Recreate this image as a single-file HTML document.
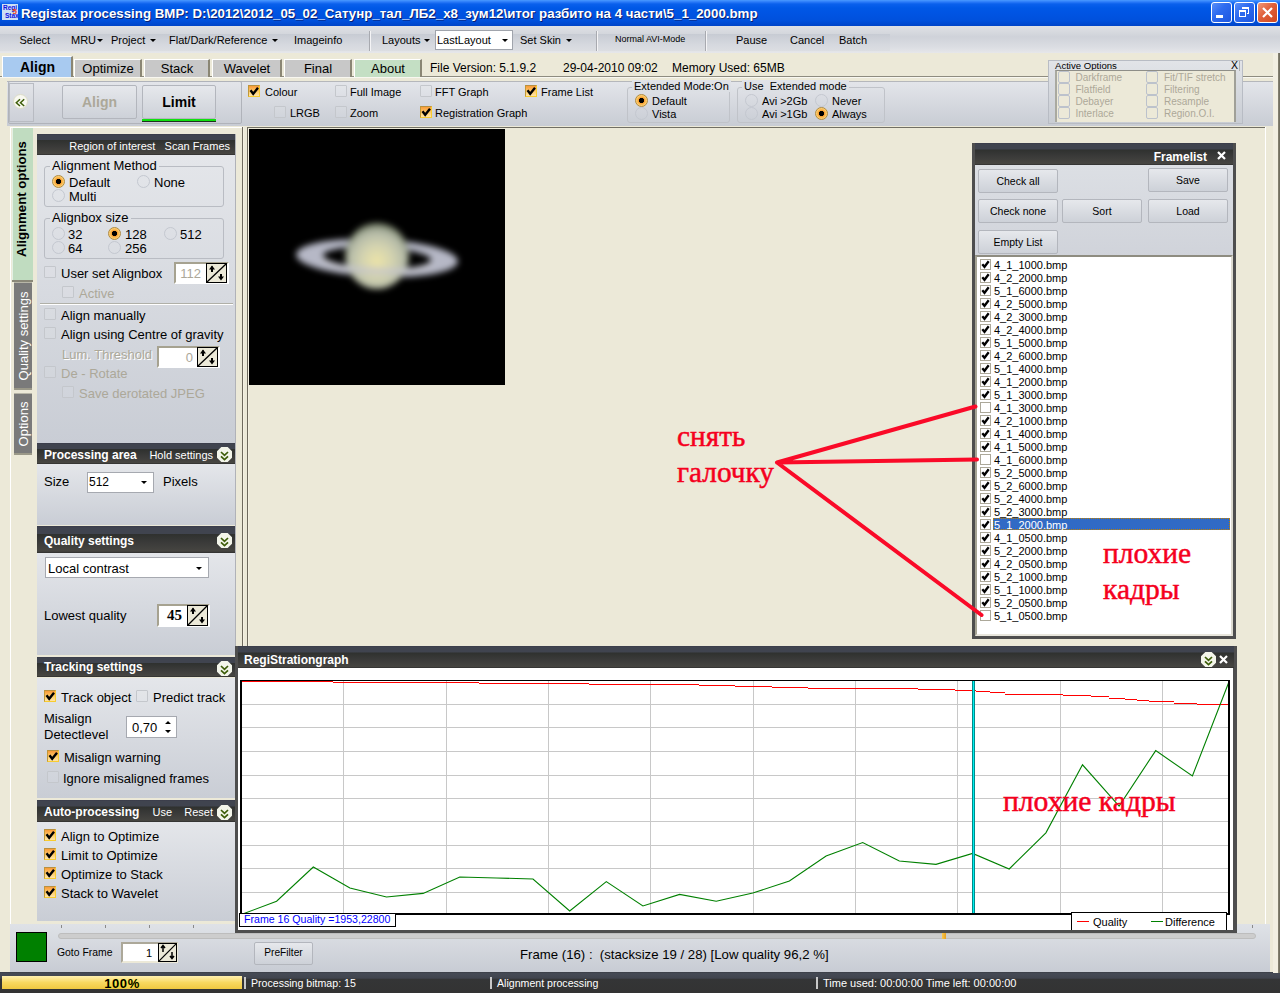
<!DOCTYPE html><html><head><meta charset="utf-8"><style>html,body{margin:0;padding:0;width:1280px;height:993px;overflow:hidden;background:#ece9d8;position:relative;font-family:"Liberation Sans",sans-serif}div,svg{box-sizing:content-box}</style></head><body>
<div style="position:absolute;left:0px;top:0px;width:1280px;height:26px;background:linear-gradient(#4a9aff 0,#2a7af8 2px,#0a60ec 4px,#0058e6 8px,#0054e3 50%,#0050dc 80%,#0044c8 100%)"></div>
<div style="position:absolute;left:2px;top:4px;width:16px;height:16px;background:#cde0f4"></div>
<div style="position:absolute;left:3px;top:4px;font:bold 6.5px/7px 'Liberation Sans',sans-serif;color:#1010e0;letter-spacing:0px">Regi</div>
<div style="position:absolute;left:5px;top:12px;font:bold 6.5px/7px 'Liberation Sans',sans-serif;color:#1010e0;letter-spacing:0px">Stax</div>
<div style="position:absolute;left:12.5px;top:7.5px;font:bold 8px/8px 'Liberation Sans',sans-serif;color:#f04020">5</div>
<div style="position:absolute;left:21px;top:6.74px;font:bold 13.3px/13.3px 'Liberation Sans', sans-serif;color:#fff;white-space:pre;text-shadow:1px 1px 0 #0a1e70;letter-spacing:0px">Registax processing BMP: D:\2012\2012_05_02_Сатунр_тал_ЛБ2_х8_зум12\итог разбито на 4 части\5_1_2000.bmp</div>
<div style="position:absolute;left:1211px;top:2px;width:19px;height:19px;border:1px solid #fff;border-radius:3px;background:linear-gradient(135deg,#5a8ff8 0,#2f6cf0 40%,#1d56e0 100%)"></div>
<div style="position:absolute;left:1234px;top:2px;width:19px;height:19px;border:1px solid #fff;border-radius:3px;background:linear-gradient(135deg,#5a8ff8 0,#2f6cf0 40%,#1d56e0 100%)"></div>
<div style="position:absolute;left:1257px;top:2px;width:19px;height:19px;border:1px solid #fff;border-radius:3px;background:linear-gradient(135deg,#f09878 0,#e0603a 45%,#d04820 100%)"></div>
<div style="position:absolute;left:1216px;top:15px;width:7px;height:3px;background:#fff"></div>
<svg style="position:absolute;left:1234px;top:2px" width="21" height="21" shape-rendering="crispEdges"><rect x="8" y="5" width="7" height="2" fill="#fff"/><rect x="14" y="5" width="1" height="7" fill="#fff"/><rect x="13" y="11" width="2" height="1" fill="#fff"/><rect x="5" y="8" width="7" height="2" fill="#fff"/><rect x="5" y="8" width="1" height="7" fill="#fff"/><rect x="11" y="8" width="1" height="7" fill="#fff"/><rect x="5" y="14" width="7" height="1" fill="#fff"/></svg>
<svg style="position:absolute;left:1257px;top:2px" width="21" height="21"><path d="M6 6 L15 15 M15 6 L6 15" stroke="#fff" stroke-width="2.2"/></svg>
<div style="position:absolute;left:0px;top:26px;width:1280px;height:27px;background:linear-gradient(#dfe1e5 0,#d3d6dc 30%,#cfd2d9 40%,#dcdee3 80%,#e6e7ea 100%)"></div>
<div style="position:absolute;left:0px;top:34px;width:890px;height:17px;background:linear-gradient(#c7cbd3,#d5d8de 60%,#dcdee2)"></div>
<div style="position:absolute;left:19.5px;top:34.69px;font:11px/11px 'Liberation Sans', sans-serif;color:#000;white-space:pre;">Select</div>
<div style="position:absolute;left:71px;top:34.69px;font:11px/11px 'Liberation Sans', sans-serif;color:#000;white-space:pre;">MRU</div>
<svg style="position:absolute;left:97px;top:39px" width="6" height="4"><path d="M0 0 L6 0 L3 3z" fill="#000"/></svg>
<div style="position:absolute;left:111px;top:34.69px;font:11px/11px 'Liberation Sans', sans-serif;color:#000;white-space:pre;">Project</div>
<svg style="position:absolute;left:150px;top:39px" width="6" height="4"><path d="M0 0 L6 0 L3 3z" fill="#000"/></svg>
<div style="position:absolute;left:169px;top:34.69px;font:11px/11px 'Liberation Sans', sans-serif;color:#000;white-space:pre;">Flat/Dark/Reference</div>
<svg style="position:absolute;left:272px;top:39px" width="6" height="4"><path d="M0 0 L6 0 L3 3z" fill="#000"/></svg>
<div style="position:absolute;left:294px;top:34.69px;font:11px/11px 'Liberation Sans', sans-serif;color:#000;white-space:pre;">Imageinfo</div>
<div style="position:absolute;left:369px;top:31px;width:1px;height:20px;background:#a8aab0;border-right:1px solid #f4f4f6"></div>
<div style="position:absolute;left:382px;top:34.69px;font:11px/11px 'Liberation Sans', sans-serif;color:#000;white-space:pre;">Layouts</div>
<svg style="position:absolute;left:424px;top:39px" width="6" height="4"><path d="M0 0 L6 0 L3 3z" fill="#000"/></svg>
<div style="position:absolute;left:435px;top:30px;width:76px;height:18px;background:#fff;border:1px solid #a0a4ac"></div>
<div style="position:absolute;left:437px;top:34.69px;font:11px/11px 'Liberation Sans', sans-serif;color:#000;white-space:pre;">LastLayout</div>
<svg style="position:absolute;left:502px;top:39px" width="6" height="4"><path d="M0 0 L6 0 L3 3z" fill="#000"/></svg>
<div style="position:absolute;left:520px;top:34.69px;font:11px/11px 'Liberation Sans', sans-serif;color:#000;white-space:pre;">Set Skin</div>
<svg style="position:absolute;left:566px;top:39px" width="6" height="4"><path d="M0 0 L6 0 L3 3z" fill="#000"/></svg>
<div style="position:absolute;left:596px;top:31px;width:1px;height:20px;background:#a8aab0;border-right:1px solid #f4f4f6"></div>
<div style="position:absolute;left:615px;top:35.38px;font:9px/9px 'Liberation Sans', sans-serif;color:#000;white-space:pre;">Normal AVI-Mode</div>
<div style="position:absolute;left:705px;top:31px;width:1px;height:20px;background:#a8aab0;border-right:1px solid #f4f4f6"></div>
<div style="position:absolute;left:736px;top:34.69px;font:11px/11px 'Liberation Sans', sans-serif;color:#000;white-space:pre;">Pause</div>
<div style="position:absolute;left:790px;top:34.69px;font:11px/11px 'Liberation Sans', sans-serif;color:#000;white-space:pre;">Cancel</div>
<div style="position:absolute;left:839px;top:34.69px;font:11px/11px 'Liberation Sans', sans-serif;color:#000;white-space:pre;">Batch</div>
<div style="position:absolute;left:0px;top:76px;width:1280px;height:1px;background:#8e8c80"></div>
<div style="position:absolute;left:0px;top:77px;width:1280px;height:1px;background:#f8f7f0"></div>
<div style="position:absolute;left:2px;top:56px;width:71px;height:21px;background:#a8caf0;border-top:1px solid #fff;border-left:1px solid #fff;border-right:2px solid #8a8674;box-sizing:border-box"></div>
<div style="position:absolute;left:2px;width:71px;text-align:center;top:60.15px;font:bold 14px/14px 'Liberation Sans', sans-serif;color:#000;white-space:pre;">Align</div>
<div style="position:absolute;left:74px;top:59px;width:68px;height:18px;background:#c8c8c8;border-top:1px solid #fff;border-left:1px solid #fff;border-right:2px solid #8a8674;box-sizing:border-box"></div>
<div style="position:absolute;left:74px;width:68px;text-align:center;top:62.00px;font:13px/13px 'Liberation Sans', sans-serif;color:#000;white-space:pre;">Optimize</div>
<div style="position:absolute;left:144px;top:59px;width:66px;height:18px;background:#c8c8c8;border-top:1px solid #fff;border-left:1px solid #fff;border-right:2px solid #8a8674;box-sizing:border-box"></div>
<div style="position:absolute;left:144px;width:66px;text-align:center;top:62.00px;font:13px/13px 'Liberation Sans', sans-serif;color:#000;white-space:pre;">Stack</div>
<div style="position:absolute;left:212px;top:59px;width:70px;height:18px;background:#c8c8c8;border-top:1px solid #fff;border-left:1px solid #fff;border-right:2px solid #8a8674;box-sizing:border-box"></div>
<div style="position:absolute;left:212px;width:70px;text-align:center;top:62.00px;font:13px/13px 'Liberation Sans', sans-serif;color:#000;white-space:pre;">Wavelet</div>
<div style="position:absolute;left:284px;top:59px;width:68px;height:18px;background:#c8c8c8;border-top:1px solid #fff;border-left:1px solid #fff;border-right:2px solid #8a8674;box-sizing:border-box"></div>
<div style="position:absolute;left:284px;width:68px;text-align:center;top:62.00px;font:13px/13px 'Liberation Sans', sans-serif;color:#000;white-space:pre;">Final</div>
<div style="position:absolute;left:354px;top:59px;width:68px;height:18px;background:#c4dfc4;border-top:1px solid #fff;border-left:1px solid #fff;border-right:2px solid #8a8674;box-sizing:border-box"></div>
<div style="position:absolute;left:354px;width:68px;text-align:center;top:62.00px;font:13px/13px 'Liberation Sans', sans-serif;color:#000;white-space:pre;">About</div>
<div style="position:absolute;left:430px;top:61.84px;font:12px/12px 'Liberation Sans', sans-serif;color:#000;white-space:pre;">File Version: 5.1.9.2</div>
<div style="position:absolute;left:563px;top:61.84px;font:12px/12px 'Liberation Sans', sans-serif;color:#000;white-space:pre;">29-04-2010 09:02</div>
<div style="position:absolute;left:672px;top:61.84px;font:12px/12px 'Liberation Sans', sans-serif;color:#000;white-space:pre;">Memory Used: 65MB</div>
<div style="position:absolute;left:7px;top:81px;width:1266px;height:45px;background:linear-gradient(#e3e5ea,#c8ccd4);border-top:1px solid #b5b7bb;box-sizing:border-box"></div>
<div style="position:absolute;left:8px;top:81px;width:234px;height:43px;border:1px solid #b0b3ba;border-radius:2px;box-sizing:border-box"></div>
<div style="position:absolute;left:9px;top:83px;width:25px;height:39px;border:1px solid #b8bbc2;box-sizing:border-box;background:linear-gradient(#e2e4e8,#cdd0d8)"></div>
<div style="position:absolute;left:13px;top:94px;width:13px;height:13px;border-radius:50%;background:#f8f8f0;border:1px solid #dcdcc8"></div>
<svg style="position:absolute;left:13px;top:94px" width="15" height="15"><path d="M7 5.3 L3.3 8.7 L7 12 M11.2 5.3 L7.5 8.7 L11.2 12" stroke="#3c5c08" stroke-width="1.5" fill="none"/></svg>
<div style="position:absolute;left:62px;top:85px;width:75px;height:34px;box-sizing:border-box;border:1px solid #b3b6bd;border-radius:2px;background:linear-gradient(#e6e8ec,#cdd1d8)"></div>
<div style="position:absolute;left:62px;width:75px;text-align:center;top:95.15px;font:bold 14px/14px 'Liberation Sans', sans-serif;color:#aca899;white-space:pre;">Align</div>
<div style="position:absolute;left:142px;top:85px;width:74px;height:34px;box-sizing:border-box;border:1px solid #b3b6bd;border-radius:2px;background:linear-gradient(#e6e8ec,#cdd1d8)"></div>
<div style="position:absolute;left:142px;width:74px;text-align:center;top:95.15px;font:bold 14px/14px 'Liberation Sans', sans-serif;color:#000;white-space:pre;">Limit</div>
<div style="position:absolute;left:142px;top:119px;width:74px;height:3px;background:#10e010;border-bottom:1px solid #203020;box-sizing:border-box"></div>
<div style="position:absolute;left:248px;top:85px;width:10px;height:10px;border:1px solid #f8cc30;border-top-color:#b89040;border-left-color:#c09838;background:linear-gradient(#f89a38,#ffd070 60%,#ffe4a8);"></div>
<svg style="position:absolute;left:248px;top:85px" width="12" height="12"><path d="M2.5 5.3 L5.2 8.8 L10 2.8" stroke="#000" stroke-width="2.4" fill="none"/></svg>
<div style="position:absolute;left:265px;top:86.69px;font:11px/11px 'Liberation Sans', sans-serif;color:#000;white-space:pre;">Colour</div>
<div style="position:absolute;left:335px;top:85px;width:10px;height:10px;border:1px solid #c4c7cc;border-radius:1px;background:rgba(255,255,255,0.08);"></div>
<div style="position:absolute;left:350px;top:86.69px;font:11px/11px 'Liberation Sans', sans-serif;color:#000;white-space:pre;">Full Image</div>
<div style="position:absolute;left:420px;top:85px;width:10px;height:10px;border:1px solid #c4c7cc;border-radius:1px;background:rgba(255,255,255,0.08);"></div>
<div style="position:absolute;left:435px;top:86.69px;font:11px/11px 'Liberation Sans', sans-serif;color:#000;white-space:pre;">FFT Graph</div>
<div style="position:absolute;left:525px;top:85px;width:10px;height:10px;border:1px solid #f8cc30;border-top-color:#b89040;border-left-color:#c09838;background:linear-gradient(#f89a38,#ffd070 60%,#ffe4a8);"></div>
<svg style="position:absolute;left:525px;top:85px" width="12" height="12"><path d="M2.5 5.3 L5.2 8.8 L10 2.8" stroke="#000" stroke-width="2.4" fill="none"/></svg>
<div style="position:absolute;left:541px;top:86.69px;font:11px/11px 'Liberation Sans', sans-serif;color:#000;white-space:pre;">Frame List</div>
<div style="position:absolute;left:274px;top:106px;width:10px;height:10px;border:1px solid #c4c7cc;border-radius:1px;background:rgba(255,255,255,0.08);"></div>
<div style="position:absolute;left:290px;top:107.69px;font:11px/11px 'Liberation Sans', sans-serif;color:#000;white-space:pre;">LRGB</div>
<div style="position:absolute;left:335px;top:106px;width:10px;height:10px;border:1px solid #c4c7cc;border-radius:1px;background:rgba(255,255,255,0.08);"></div>
<div style="position:absolute;left:350px;top:107.69px;font:11px/11px 'Liberation Sans', sans-serif;color:#000;white-space:pre;">Zoom</div>
<div style="position:absolute;left:420px;top:106px;width:10px;height:10px;border:1px solid #f8cc30;border-top-color:#b89040;border-left-color:#c09838;background:linear-gradient(#f89a38,#ffd070 60%,#ffe4a8);"></div>
<svg style="position:absolute;left:420px;top:106px" width="12" height="12"><path d="M2.5 5.3 L5.2 8.8 L10 2.8" stroke="#000" stroke-width="2.4" fill="none"/></svg>
<div style="position:absolute;left:435px;top:107.69px;font:11px/11px 'Liberation Sans', sans-serif;color:#000;white-space:pre;">Registration Graph</div>
<div style="position:absolute;left:627px;top:87px;width:103px;height:36px;box-sizing:border-box;border:1px solid #c0c3c9;border-radius:3px"></div>
<div style="position:absolute;left:632px;top:80px;height:12px;padding:0 2px;font:11px/12px 'Liberation Sans', sans-serif;white-space:pre;background:linear-gradient(#e1e3e8,#dcdfe4)">Extended Mode:On</div>
<div style="position:absolute;left:635px;top:94px;width:11px;height:11px;border:1px solid #b08a40;border-radius:50%;background:radial-gradient(circle at 50% 50%,#000 0,#000 2.4px,#f8a030 2.9px,#ffe08a 6px);"></div>
<div style="position:absolute;left:652px;top:95.69px;font:11px/11px 'Liberation Sans', sans-serif;color:#000;white-space:pre;">Default</div>
<div style="position:absolute;left:635px;top:107px;width:11px;height:11px;border:1px solid #c4c8d0;border-radius:50%;"></div>
<div style="position:absolute;left:652px;top:108.69px;font:11px/11px 'Liberation Sans', sans-serif;color:#000;white-space:pre;">Vista</div>
<div style="position:absolute;left:737px;top:87px;width:148px;height:36px;box-sizing:border-box;border:1px solid #c0c3c9;border-radius:3px"></div>
<div style="position:absolute;left:742px;top:80px;height:12px;padding:0 2px;font:11px/12px 'Liberation Sans', sans-serif;white-space:pre;background:linear-gradient(#e1e3e8,#dcdfe4)">Use  Extended mode</div>
<div style="position:absolute;left:745px;top:94px;width:11px;height:11px;border:1px solid #c4c8d0;border-radius:50%;"></div>
<div style="position:absolute;left:762px;top:95.69px;font:11px/11px 'Liberation Sans', sans-serif;color:#000;white-space:pre;">Avi &gt;2Gb</div>
<div style="position:absolute;left:815px;top:94px;width:11px;height:11px;border:1px solid #c4c8d0;border-radius:50%;"></div>
<div style="position:absolute;left:832px;top:95.69px;font:11px/11px 'Liberation Sans', sans-serif;color:#000;white-space:pre;">Never</div>
<div style="position:absolute;left:745px;top:107px;width:11px;height:11px;border:1px solid #c4c8d0;border-radius:50%;"></div>
<div style="position:absolute;left:762px;top:108.69px;font:11px/11px 'Liberation Sans', sans-serif;color:#000;white-space:pre;">Avi &gt;1Gb</div>
<div style="position:absolute;left:815px;top:107px;width:11px;height:11px;border:1px solid #b08a40;border-radius:50%;background:radial-gradient(circle at 50% 50%,#000 0,#000 2.4px,#f8a030 2.9px,#ffe08a 6px);"></div>
<div style="position:absolute;left:832px;top:108.69px;font:11px/11px 'Liberation Sans', sans-serif;color:#000;white-space:pre;">Always</div>
<div style="position:absolute;left:1048px;top:60px;width:195px;height:64px;background:linear-gradient(#e2e4e8,#c9cdd4);border:1px solid #b8bcc4;box-sizing:border-box"></div>
<div style="position:absolute;left:1055px;top:60.87px;font:9.6px/9.6px 'Liberation Sans', sans-serif;color:#000;white-space:pre;">Active Options</div>
<div style="position:absolute;left:1231px;top:60.11px;font:10.5px/10.5px 'Liberation Sans', sans-serif;color:#000;white-space:pre;">X</div>
<div style="position:absolute;left:1239px;top:61px;width:1px;height:10px;background:#b0b0b0"></div>
<div style="position:absolute;left:1055px;top:70px;width:181px;height:52px;border-left:2px solid #a9a9a0;border-top:1px solid #8e8e88;border-right:2px solid #a0a098;box-sizing:border-box;background:#ece9d8"></div>
<div style="position:absolute;left:1058px;top:71px;width:12px;height:12px;border:1px solid #bcc2cc;box-sizing:border-box;border-radius:2px"></div>
<div style="position:absolute;left:1075.5px;top:72.53px;font:10px/10px 'Liberation Sans', sans-serif;color:#aca899;white-space:pre;">Darkframe</div>
<div style="position:absolute;left:1146px;top:71px;width:12px;height:12px;border:1px solid #bcc2cc;box-sizing:border-box;border-radius:2px"></div>
<div style="position:absolute;left:1164px;top:72.53px;font:10px/10px 'Liberation Sans', sans-serif;color:#aca899;white-space:pre;">Fit/TIF stretch</div>
<div style="position:absolute;left:1058px;top:83px;width:12px;height:12px;border:1px solid #bcc2cc;box-sizing:border-box;border-radius:2px"></div>
<div style="position:absolute;left:1075.5px;top:84.53px;font:10px/10px 'Liberation Sans', sans-serif;color:#aca899;white-space:pre;">Flatfield</div>
<div style="position:absolute;left:1146px;top:83px;width:12px;height:12px;border:1px solid #bcc2cc;box-sizing:border-box;border-radius:2px"></div>
<div style="position:absolute;left:1164px;top:84.53px;font:10px/10px 'Liberation Sans', sans-serif;color:#aca899;white-space:pre;">Filtering</div>
<div style="position:absolute;left:1058px;top:95px;width:12px;height:12px;border:1px solid #bcc2cc;box-sizing:border-box;border-radius:2px"></div>
<div style="position:absolute;left:1075.5px;top:96.53px;font:10px/10px 'Liberation Sans', sans-serif;color:#aca899;white-space:pre;">Debayer</div>
<div style="position:absolute;left:1146px;top:95px;width:12px;height:12px;border:1px solid #bcc2cc;box-sizing:border-box;border-radius:2px"></div>
<div style="position:absolute;left:1164px;top:96.53px;font:10px/10px 'Liberation Sans', sans-serif;color:#aca899;white-space:pre;">Resample</div>
<div style="position:absolute;left:1058px;top:107px;width:12px;height:12px;border:1px solid #bcc2cc;box-sizing:border-box;border-radius:2px"></div>
<div style="position:absolute;left:1075.5px;top:108.53px;font:10px/10px 'Liberation Sans', sans-serif;color:#aca899;white-space:pre;">Interlace</div>
<div style="position:absolute;left:1146px;top:107px;width:12px;height:12px;border:1px solid #bcc2cc;box-sizing:border-box;border-radius:2px"></div>
<div style="position:absolute;left:1164px;top:108.53px;font:10px/10px 'Liberation Sans', sans-serif;color:#aca899;white-space:pre;">Region.O.I.</div>
<div style="position:absolute;left:10px;top:127px;width:230px;height:797px;background:#ece9d8"></div>
<div style="position:absolute;left:10px;top:127px;width:232px;height:1px;background:#fff"></div>
<div style="position:absolute;left:10px;top:127px;width:1px;height:797px;background:#fff"></div>
<div style="position:absolute;left:12px;top:128px;width:21px;height:152px;background:#c0dcc0;box-sizing:border-box;border-top:none;border-bottom:none"></div>
<div style="position:absolute;left:21.5px;top:199px;width:0;height:0;"><div style="position:absolute;left:0;top:0;transform:translate(-50%,-50%) rotate(-90deg);font:bold 13.2px/13.2px 'Liberation Sans', sans-serif;color:#000;white-space:pre">Alignment options</div></div>
<div style="position:absolute;left:12px;top:128px;width:1px;height:152px;background:#e4f0e4"></div>
<div style="position:absolute;left:12px;top:280px;width:21px;height:2px;background:#8a8878"></div>
<div style="position:absolute;left:14px;top:282px;width:18px;height:108px;background:#7a7a7a;box-sizing:border-box;border-top:1px solid #b8b6a8;border-bottom:2px solid #9a9888"></div>
<div style="position:absolute;left:23px;top:336px;width:0;height:0;"><div style="position:absolute;left:0;top:0;transform:translate(-50%,-50%) rotate(-90deg);font:13px/13px 'Liberation Sans', sans-serif;color:#fff;white-space:pre">Quality settings</div></div>
<div style="position:absolute;left:14px;top:393px;width:18px;height:62px;background:#7a7a7a;box-sizing:border-box;border-top:1px solid #b8b6a8;border-bottom:2px solid #9a9888"></div>
<div style="position:absolute;left:23px;top:424px;width:0;height:0;"><div style="position:absolute;left:0;top:0;transform:translate(-50%,-50%) rotate(-90deg);font:13px/13px 'Liberation Sans', sans-serif;color:#fff;white-space:pre">Options</div></div>
<div style="position:absolute;left:37px;top:134px;width:198px;height:21px;background:linear-gradient(#3a3c4a 0,#40444f 7%,#40444f 28%,#2f312f 31%,#3a3a39 60%,#464541 93%,#2e2e2e 100%)"></div>
<div style="position:absolute;right:1050px;top:140.69px;font:11px/11px 'Liberation Sans', sans-serif;color:#fff;white-space:pre;">Region of interest   Scan Frames</div>
<div style="position:absolute;left:37px;top:155px;width:198px;height:288px;background:linear-gradient(#e4e6ea,#c9cdd5)"></div>
<div style="position:absolute;left:44px;top:166px;width:180px;height:41px;box-sizing:border-box;border:1px solid #b9bcc3;border-radius:3px"></div>
<div style="position:absolute;left:50px;top:159px;height:14px;padding:0 2px;font:13px/14px 'Liberation Sans', sans-serif;white-space:pre;background:#e3e5e9">Alignment Method</div>
<div style="position:absolute;left:52px;top:175px;width:11px;height:11px;border:1px solid #b08a40;border-radius:50%;background:radial-gradient(circle at 50% 50%,#000 0,#000 2.4px,#f8a030 2.9px,#ffe08a 6px);"></div>
<div style="position:absolute;left:69px;top:176.00px;font:13px/13px 'Liberation Sans', sans-serif;color:#000;white-space:pre;">Default</div>
<div style="position:absolute;left:137px;top:175px;width:11px;height:11px;border:1px solid #c4c8d0;border-radius:50%;"></div>
<div style="position:absolute;left:154px;top:176.00px;font:13px/13px 'Liberation Sans', sans-serif;color:#000;white-space:pre;">None</div>
<div style="position:absolute;left:52px;top:189px;width:11px;height:11px;border:1px solid #c4c8d0;border-radius:50%;"></div>
<div style="position:absolute;left:69px;top:190.00px;font:13px/13px 'Liberation Sans', sans-serif;color:#000;white-space:pre;">Multi</div>
<div style="position:absolute;left:44px;top:218px;width:180px;height:41px;box-sizing:border-box;border:1px solid #b9bcc3;border-radius:3px"></div>
<div style="position:absolute;left:50px;top:211px;height:14px;padding:0 2px;font:13px/14px 'Liberation Sans', sans-serif;white-space:pre;background:#dee1e5">Alignbox size</div>
<div style="position:absolute;left:52px;top:227px;width:11px;height:11px;border:1px solid #c4c8d0;border-radius:50%;"></div>
<div style="position:absolute;left:68px;top:228.00px;font:13px/13px 'Liberation Sans', sans-serif;color:#000;white-space:pre;">32</div>
<div style="position:absolute;left:108px;top:227px;width:11px;height:11px;border:1px solid #b08a40;border-radius:50%;background:radial-gradient(circle at 50% 50%,#000 0,#000 2.4px,#f8a030 2.9px,#ffe08a 6px);"></div>
<div style="position:absolute;left:125px;top:228.00px;font:13px/13px 'Liberation Sans', sans-serif;color:#000;white-space:pre;">128</div>
<div style="position:absolute;left:164px;top:227px;width:11px;height:11px;border:1px solid #c4c8d0;border-radius:50%;"></div>
<div style="position:absolute;left:180px;top:228.00px;font:13px/13px 'Liberation Sans', sans-serif;color:#000;white-space:pre;">512</div>
<div style="position:absolute;left:52px;top:241px;width:11px;height:11px;border:1px solid #c4c8d0;border-radius:50%;"></div>
<div style="position:absolute;left:68px;top:242.00px;font:13px/13px 'Liberation Sans', sans-serif;color:#000;white-space:pre;">64</div>
<div style="position:absolute;left:108px;top:241px;width:11px;height:11px;border:1px solid #c4c8d0;border-radius:50%;"></div>
<div style="position:absolute;left:125px;top:242.00px;font:13px/13px 'Liberation Sans', sans-serif;color:#000;white-space:pre;">256</div>
<div style="position:absolute;left:44px;top:266px;width:10px;height:10px;border:1px solid #c4c7cc;border-radius:1px;background:rgba(255,255,255,0.08);"></div>
<div style="position:absolute;left:61px;top:267.00px;font:13px/13px 'Liberation Sans', sans-serif;color:#000;white-space:pre;">User set Alignbox</div>
<div style="position:absolute;left:174px;top:262px;width:55px;height:22px;box-sizing:border-box;border:2px solid #fff;border-top-color:#a6a290;border-left-color:#a6a290;background:#fff"></div>
<div style="position:absolute;right:1079px;top:266.68px;font:13px/13px 'Liberation Sans', sans-serif;color:#aca899;white-space:pre;">112</div>
<div style="position:absolute;left:206px;top:263px;width:21px;height:20px;box-sizing:border-box;border:1px solid #000;background:#ece9d8"></div>
<svg style="position:absolute;left:206px;top:263px" width="21" height="20"><path d="M1 19 L20 1" stroke="#000" stroke-width="1.3"/><path d="M6 3.5 L6 9" stroke="#000" stroke-width="2"/><path d="M3 6.5 L6 2.5 L9 6.5z" fill="#000"/><path d="M15 11 L15 16" stroke="#000" stroke-width="2"/><path d="M12 13.5 L15 17.5 L18 13.5z" fill="#000"/></svg>
<div style="position:absolute;left:62px;top:286px;width:10px;height:10px;border:1px solid #c4c7cc;border-radius:1px;background:rgba(255,255,255,0.08);"></div>
<div style="position:absolute;left:79px;top:287.00px;font:13px/13px 'Liberation Sans', sans-serif;color:#aca899;white-space:pre;">Active</div>
<div style="position:absolute;left:40px;top:303px;width:193px;height:1px;background:#fff;border-top:1px solid #b0b0a8"></div>
<div style="position:absolute;left:44px;top:308px;width:10px;height:10px;border:1px solid #c4c7cc;border-radius:1px;background:rgba(255,255,255,0.08);"></div>
<div style="position:absolute;left:61px;top:309.00px;font:13px/13px 'Liberation Sans', sans-serif;color:#000;white-space:pre;">Align manually</div>
<div style="position:absolute;left:44px;top:327px;width:10px;height:10px;border:1px solid #c4c7cc;border-radius:1px;background:rgba(255,255,255,0.08);"></div>
<div style="position:absolute;left:61px;top:328.00px;font:13px/13px 'Liberation Sans', sans-serif;color:#000;white-space:pre;">Align using Centre of gravity</div>
<div style="position:absolute;left:62px;top:348.00px;font:13px/13px 'Liberation Sans', sans-serif;color:#aca899;white-space:pre;text-shadow:1px 1px 0 #fff">Lum. Threshold</div>
<div style="position:absolute;left:157px;top:346px;width:63px;height:22px;box-sizing:border-box;border:2px solid #fff;border-top-color:#a6a290;border-left-color:#a6a290;background:#fff"></div>
<div style="position:absolute;right:1087px;top:350.68px;font:13px/13px 'Liberation Sans', sans-serif;color:#aca899;white-space:pre;">0</div>
<div style="position:absolute;left:197px;top:347px;width:21px;height:20px;box-sizing:border-box;border:1px solid #000;background:#ece9d8"></div>
<svg style="position:absolute;left:197px;top:347px" width="21" height="20"><path d="M1 19 L20 1" stroke="#000" stroke-width="1.3"/><path d="M6 3.5 L6 9" stroke="#000" stroke-width="2"/><path d="M3 6.5 L6 2.5 L9 6.5z" fill="#000"/><path d="M15 11 L15 16" stroke="#000" stroke-width="2"/><path d="M12 13.5 L15 17.5 L18 13.5z" fill="#000"/></svg>
<div style="position:absolute;left:44px;top:366px;width:10px;height:10px;border:1px solid #c4c7cc;border-radius:1px;background:rgba(255,255,255,0.08);"></div>
<div style="position:absolute;left:61px;top:367.00px;font:13px/13px 'Liberation Sans', sans-serif;color:#aca899;white-space:pre;">De - Rotate</div>
<div style="position:absolute;left:62px;top:386px;width:10px;height:10px;border:1px solid #c4c7cc;border-radius:1px;background:rgba(255,255,255,0.08);"></div>
<div style="position:absolute;left:79px;top:387.00px;font:13px/13px 'Liberation Sans', sans-serif;color:#aca899;white-space:pre;">Save derotated JPEG</div>
<div style="position:absolute;left:37px;top:443px;width:198px;height:21px;background:linear-gradient(#3a3c4a 0,#40444f 7%,#40444f 28%,#2f312f 31%,#3a3a39 60%,#464541 93%,#2e2e2e 100%)"></div>
<div style="position:absolute;left:44px;top:448.84px;font:bold 12px/12px 'Liberation Sans', sans-serif;color:#fff;white-space:pre;">Processing area</div>
<div style="position:absolute;right:1067px;top:449.69px;font:11px/11px 'Liberation Sans', sans-serif;color:#fff;white-space:pre;">Hold settings</div>
<svg style="position:absolute;left:217px;top:447px" width="15" height="15"><polygon points="4.3,0 10.7,0 15,4.3 15,10.7 10.7,15 4.3,15 0,10.7 0,4.3" fill="#f3f5ea"/><path d="M4 5 L7.5 8.3 L11 5 M4 9.3 L7.5 12.6 L11 9.3" stroke="#3c5c08" stroke-width="1.7" fill="none"/></svg>
<div style="position:absolute;left:37px;top:464px;width:198px;height:61px;background:linear-gradient(#e4e6ea,#c9cdd5)"></div>
<div style="position:absolute;left:44px;top:475.00px;font:13px/13px 'Liberation Sans', sans-serif;color:#000;white-space:pre;">Size</div>
<div style="position:absolute;left:87px;top:472px;width:67px;height:21px;box-sizing:border-box;border:1px solid #a6a9b0;background:#fff"></div>
<div style="position:absolute;left:89px;top:475.84px;font:12px/12px 'Liberation Sans', sans-serif;color:#000;white-space:pre;">512</div>
<svg style="position:absolute;left:141px;top:481px" width="6" height="4"><path d="M0 0 L6 0 L3 3z" fill="#000"/></svg>
<div style="position:absolute;left:163px;top:475.00px;font:13px/13px 'Liberation Sans', sans-serif;color:#000;white-space:pre;">Pixels</div>
<div style="position:absolute;left:37px;top:526px;width:198px;height:27px;background:linear-gradient(#3a3c4a 0,#40444f 7%,#40444f 28%,#2f312f 31%,#3a3a39 60%,#464541 93%,#2e2e2e 100%)"></div>
<div style="position:absolute;left:44px;top:534.84px;font:bold 12px/12px 'Liberation Sans', sans-serif;color:#fff;white-space:pre;">Quality settings</div>
<svg style="position:absolute;left:217px;top:533px" width="15" height="15"><polygon points="4.3,0 10.7,0 15,4.3 15,10.7 10.7,15 4.3,15 0,10.7 0,4.3" fill="#f3f5ea"/><path d="M4 5 L7.5 8.3 L11 5 M4 9.3 L7.5 12.6 L11 9.3" stroke="#3c5c08" stroke-width="1.7" fill="none"/></svg>
<div style="position:absolute;left:37px;top:553px;width:198px;height:102px;background:linear-gradient(#e4e6ea,#c9cdd5)"></div>
<div style="position:absolute;left:45px;top:557px;width:164px;height:21px;box-sizing:border-box;border:1px solid #a6a9b0;background:#fff"></div>
<div style="position:absolute;left:48px;top:562.00px;font:13px/13px 'Liberation Sans', sans-serif;color:#000;white-space:pre;">Local contrast</div>
<svg style="position:absolute;left:196px;top:567px" width="6" height="4"><path d="M0 0 L6 0 L3 3z" fill="#000"/></svg>
<div style="position:absolute;left:44px;top:609.00px;font:13px/13px 'Liberation Sans', sans-serif;color:#000;white-space:pre;">Lowest quality</div>
<div style="position:absolute;left:157px;top:604px;width:53px;height:23px;box-sizing:border-box;border:2px solid #fff;border-top-color:#a6a290;border-left-color:#a6a290;background:#fff"></div>
<div style="position:absolute;right:1098px;top:608.20px;font:bold 15px/15px 'Liberation Serif', serif;color:#000;white-space:pre;">45</div>
<div style="position:absolute;left:187px;top:605px;width:21px;height:21px;box-sizing:border-box;border:1px solid #000;background:#ece9d8"></div>
<svg style="position:absolute;left:187px;top:605px" width="21" height="21"><path d="M1 20 L20 1" stroke="#000" stroke-width="1.3"/><path d="M6 3.5 L6 9" stroke="#000" stroke-width="2"/><path d="M3 6.5 L6 2.5 L9 6.5z" fill="#000"/><path d="M15 12 L15 17" stroke="#000" stroke-width="2"/><path d="M12 14.5 L15 18.5 L18 14.5z" fill="#000"/></svg>
<div style="position:absolute;left:37px;top:657px;width:198px;height:20px;background:linear-gradient(#3a3c4a 0,#40444f 7%,#40444f 28%,#2f312f 31%,#3a3a39 60%,#464541 93%,#2e2e2e 100%)"></div>
<div style="position:absolute;left:44px;top:661.34px;font:bold 12px/12px 'Liberation Sans', sans-serif;color:#fff;white-space:pre;">Tracking settings</div>
<svg style="position:absolute;left:217px;top:661px" width="15" height="15"><polygon points="4.3,0 10.7,0 15,4.3 15,10.7 10.7,15 4.3,15 0,10.7 0,4.3" fill="#f3f5ea"/><path d="M4 5 L7.5 8.3 L11 5 M4 9.3 L7.5 12.6 L11 9.3" stroke="#3c5c08" stroke-width="1.7" fill="none"/></svg>
<div style="position:absolute;left:37px;top:678px;width:198px;height:120px;background:linear-gradient(#e4e6ea,#c9cdd5)"></div>
<div style="position:absolute;left:44px;top:690px;width:10px;height:10px;border:1px solid #f8cc30;border-top-color:#b89040;border-left-color:#c09838;background:linear-gradient(#f89a38,#ffd070 60%,#ffe4a8);"></div>
<svg style="position:absolute;left:44px;top:690px" width="12" height="12"><path d="M2.5 5.3 L5.2 8.8 L10 2.8" stroke="#000" stroke-width="2.4" fill="none"/></svg>
<div style="position:absolute;left:61px;top:691.00px;font:13px/13px 'Liberation Sans', sans-serif;color:#000;white-space:pre;">Track object</div>
<div style="position:absolute;left:136px;top:690px;width:10px;height:10px;border:1px solid #c4c7cc;border-radius:1px;background:rgba(255,255,255,0.08);"></div>
<div style="position:absolute;left:153px;top:691.00px;font:13px/13px 'Liberation Sans', sans-serif;color:#000;white-space:pre;">Predict track</div>
<div style="position:absolute;left:44px;top:712.00px;font:13px/13px 'Liberation Sans', sans-serif;color:#000;white-space:pre;">Misalign</div>
<div style="position:absolute;left:44px;top:728.00px;font:13px/13px 'Liberation Sans', sans-serif;color:#000;white-space:pre;">Detectlevel</div>
<div style="position:absolute;left:126px;top:716px;width:51px;height:22px;box-sizing:border-box;border:1px solid #a6a9b0;background:#fff"></div>
<div style="position:absolute;left:132px;top:721.00px;font:13px/13px 'Liberation Sans', sans-serif;color:#000;white-space:pre;">0,70</div>
<svg style="position:absolute;left:165px;top:720px" width="6" height="15"><path d="M0 4 L6 4 L3 1z M0 10 L6 10 L3 13z" fill="#000"/></svg>
<div style="position:absolute;left:47px;top:750px;width:10px;height:10px;border:1px solid #f8cc30;border-top-color:#b89040;border-left-color:#c09838;background:linear-gradient(#f89a38,#ffd070 60%,#ffe4a8);"></div>
<svg style="position:absolute;left:47px;top:750px" width="12" height="12"><path d="M2.5 5.3 L5.2 8.8 L10 2.8" stroke="#000" stroke-width="2.4" fill="none"/></svg>
<div style="position:absolute;left:64px;top:751.00px;font:13px/13px 'Liberation Sans', sans-serif;color:#000;white-space:pre;">Misalign warning</div>
<div style="position:absolute;left:47px;top:771px;width:10px;height:10px;border:1px solid #c4c7cc;border-radius:1px;background:rgba(255,255,255,0.08);"></div>
<div style="position:absolute;left:63px;top:772.00px;font:13px/13px 'Liberation Sans', sans-serif;color:#000;white-space:pre;">Ignore misaligned frames</div>
<div style="position:absolute;left:37px;top:800px;width:198px;height:22px;background:linear-gradient(#3a3c4a 0,#40444f 7%,#40444f 28%,#2f312f 31%,#3a3a39 60%,#464541 93%,#2e2e2e 100%)"></div>
<div style="position:absolute;left:44px;top:805.84px;font:bold 12px/12px 'Liberation Sans', sans-serif;color:#fff;white-space:pre;">Auto-processing</div>
<div style="position:absolute;right:1067px;top:806.69px;font:11px/11px 'Liberation Sans', sans-serif;color:#fff;white-space:pre;">Use    Reset</div>
<svg style="position:absolute;left:217px;top:805px" width="15" height="15"><polygon points="4.3,0 10.7,0 15,4.3 15,10.7 10.7,15 4.3,15 0,10.7 0,4.3" fill="#f3f5ea"/><path d="M4 5 L7.5 8.3 L11 5 M4 9.3 L7.5 12.6 L11 9.3" stroke="#3c5c08" stroke-width="1.7" fill="none"/></svg>
<div style="position:absolute;left:37px;top:822px;width:198px;height:99px;background:linear-gradient(#e4e6ea,#c9cdd5)"></div>
<div style="position:absolute;left:44px;top:829px;width:10px;height:10px;border:1px solid #f8cc30;border-top-color:#b89040;border-left-color:#c09838;background:linear-gradient(#f89a38,#ffd070 60%,#ffe4a8);"></div>
<svg style="position:absolute;left:44px;top:829px" width="12" height="12"><path d="M2.5 5.3 L5.2 8.8 L10 2.8" stroke="#000" stroke-width="2.4" fill="none"/></svg>
<div style="position:absolute;left:61px;top:830.00px;font:13px/13px 'Liberation Sans', sans-serif;color:#000;white-space:pre;">Align to Optimize</div>
<div style="position:absolute;left:44px;top:848px;width:10px;height:10px;border:1px solid #f8cc30;border-top-color:#b89040;border-left-color:#c09838;background:linear-gradient(#f89a38,#ffd070 60%,#ffe4a8);"></div>
<svg style="position:absolute;left:44px;top:848px" width="12" height="12"><path d="M2.5 5.3 L5.2 8.8 L10 2.8" stroke="#000" stroke-width="2.4" fill="none"/></svg>
<div style="position:absolute;left:61px;top:849.00px;font:13px/13px 'Liberation Sans', sans-serif;color:#000;white-space:pre;">Limit to Optimize</div>
<div style="position:absolute;left:44px;top:867px;width:10px;height:10px;border:1px solid #f8cc30;border-top-color:#b89040;border-left-color:#c09838;background:linear-gradient(#f89a38,#ffd070 60%,#ffe4a8);"></div>
<svg style="position:absolute;left:44px;top:867px" width="12" height="12"><path d="M2.5 5.3 L5.2 8.8 L10 2.8" stroke="#000" stroke-width="2.4" fill="none"/></svg>
<div style="position:absolute;left:61px;top:868.00px;font:13px/13px 'Liberation Sans', sans-serif;color:#000;white-space:pre;">Optimize to Stack</div>
<div style="position:absolute;left:44px;top:886px;width:10px;height:10px;border:1px solid #f8cc30;border-top-color:#b89040;border-left-color:#c09838;background:linear-gradient(#f89a38,#ffd070 60%,#ffe4a8);"></div>
<svg style="position:absolute;left:44px;top:886px" width="12" height="12"><path d="M2.5 5.3 L5.2 8.8 L10 2.8" stroke="#000" stroke-width="2.4" fill="none"/></svg>
<div style="position:absolute;left:61px;top:887.00px;font:13px/13px 'Liberation Sans', sans-serif;color:#000;white-space:pre;">Stack to Wavelet</div>
<div style="position:absolute;left:10px;top:924px;width:1260px;height:48px;background:linear-gradient(#dfe2e7,#c8ccd4)"></div>
<div style="position:absolute;left:58px;top:933px;width:1198px;height:6px;background:#cdcdcd;border-radius:3px;border:1px solid #bdbdbd;box-sizing:border-box"></div>
<div style="position:absolute;left:61px;top:925px;width:1px;height:3px;background:#8a8a8a"></div>
<div style="position:absolute;left:105px;top:925px;width:1px;height:3px;background:#8a8a8a"></div>
<div style="position:absolute;left:149px;top:925px;width:1px;height:3px;background:#8a8a8a"></div>
<div style="position:absolute;left:193px;top:925px;width:1px;height:3px;background:#8a8a8a"></div>
<div style="position:absolute;left:237px;top:925px;width:1px;height:3px;background:#8a8a8a"></div>
<div style="position:absolute;left:282px;top:925px;width:1px;height:3px;background:#8a8a8a"></div>
<div style="position:absolute;left:326px;top:925px;width:1px;height:3px;background:#8a8a8a"></div>
<div style="position:absolute;left:370px;top:925px;width:1px;height:3px;background:#8a8a8a"></div>
<div style="position:absolute;left:414px;top:925px;width:1px;height:3px;background:#8a8a8a"></div>
<div style="position:absolute;left:458px;top:925px;width:1px;height:3px;background:#8a8a8a"></div>
<div style="position:absolute;left:502px;top:925px;width:1px;height:3px;background:#8a8a8a"></div>
<div style="position:absolute;left:546px;top:925px;width:1px;height:3px;background:#8a8a8a"></div>
<div style="position:absolute;left:590px;top:925px;width:1px;height:3px;background:#8a8a8a"></div>
<div style="position:absolute;left:634px;top:925px;width:1px;height:3px;background:#8a8a8a"></div>
<div style="position:absolute;left:678px;top:925px;width:1px;height:3px;background:#8a8a8a"></div>
<div style="position:absolute;left:722px;top:925px;width:1px;height:3px;background:#8a8a8a"></div>
<div style="position:absolute;left:767px;top:925px;width:1px;height:3px;background:#8a8a8a"></div>
<div style="position:absolute;left:811px;top:925px;width:1px;height:3px;background:#8a8a8a"></div>
<div style="position:absolute;left:855px;top:925px;width:1px;height:3px;background:#8a8a8a"></div>
<div style="position:absolute;left:899px;top:925px;width:1px;height:3px;background:#8a8a8a"></div>
<div style="position:absolute;left:943px;top:925px;width:1px;height:3px;background:#8a8a8a"></div>
<div style="position:absolute;left:987px;top:925px;width:1px;height:3px;background:#8a8a8a"></div>
<div style="position:absolute;left:1031px;top:925px;width:1px;height:3px;background:#8a8a8a"></div>
<div style="position:absolute;left:1075px;top:925px;width:1px;height:3px;background:#8a8a8a"></div>
<div style="position:absolute;left:1119px;top:925px;width:1px;height:3px;background:#8a8a8a"></div>
<div style="position:absolute;left:1164px;top:925px;width:1px;height:3px;background:#8a8a8a"></div>
<div style="position:absolute;left:1208px;top:925px;width:1px;height:3px;background:#8a8a8a"></div>
<div style="position:absolute;left:1252px;top:925px;width:1px;height:3px;background:#8a8a8a"></div>
<div style="position:absolute;left:942px;top:933px;width:4px;height:6px;background:linear-gradient(90deg,#f8c850,#e8a020)"></div>
<div style="position:absolute;left:16px;top:932px;width:31px;height:30px;background:#008000;border:1px solid #000;box-sizing:border-box"></div>
<div style="position:absolute;left:57px;top:948.20px;font:10.4px/10.4px 'Liberation Sans', sans-serif;color:#000;white-space:pre;">Goto Frame</div>
<div style="position:absolute;left:121px;top:942px;width:57px;height:21px;box-sizing:border-box;border:2px solid #ece9d8;border-top-color:#aca899;border-left-color:#aca899;background:#fff"></div>
<div style="position:absolute;right:1128px;top:947.69px;font:11px/11px 'Liberation Sans', sans-serif;color:#000;white-space:pre;">1</div>
<div style="position:absolute;left:158px;top:943px;width:19px;height:19px;box-sizing:border-box;border:1px solid #000;background:#ece9d8"></div>
<svg style="position:absolute;left:158px;top:943px" width="19" height="19"><path d="M0 19 L19 0" stroke="#000" stroke-width="1.2"/><path d="M5 3 L5 9 M3 5 L5 2.5 L7 5" stroke="#000" stroke-width="1.5" fill="none"/><path d="M14 9 L14 15 M12 13 L14 15.5 L16 13" stroke="#000" stroke-width="1.5" fill="none"/></svg>
<div style="position:absolute;left:254px;top:942px;width:59px;height:23px;box-sizing:border-box;border:1px solid #b3b6bd;border-radius:2px;background:linear-gradient(#e6e8ec,#cdd1d8)"></div>
<div style="position:absolute;left:254px;width:59px;text-align:center;top:948.37px;font:10.2px/10.2px 'Liberation Sans', sans-serif;color:#000;white-space:pre;">PreFilter</div>
<div style="position:absolute;left:520px;top:947.83px;font:13.2px/13.2px 'Liberation Sans', sans-serif;color:#000;white-space:pre;">Frame (16) :  (stacksize 19 / 28) [Low quality 96,2 %]</div>
<div style="position:absolute;left:0px;top:972px;width:1280px;height:21px;background:linear-gradient(#3a3e46 0,#454a55 8%,#40444e 30%,#343536 33%,#333 100%)"></div>
<div style="position:absolute;left:2px;top:976px;width:240px;height:13px;background:linear-gradient(#fff0b0,#f8d860 50%,#f0c840)"></div>
<div style="position:absolute;left:2px;width:240px;text-align:center;top:977.00px;font:bold 13px/13px 'Liberation Sans', sans-serif;color:#000;white-space:pre;letter-spacing:0.6px;text-shadow:0 0 1px #ff0">100%</div>
<div style="position:absolute;left:244px;top:977px;width:2px;height:12px;background:#c8c8c8"></div>
<div style="position:absolute;left:251px;top:978.03px;font:10.6px/10.6px 'Liberation Sans', sans-serif;color:#fff;white-space:pre;">Processing bitmap: 15</div>
<div style="position:absolute;left:490px;top:977px;width:2px;height:12px;background:#c8c8c8"></div>
<div style="position:absolute;left:497px;top:978.03px;font:10.6px/10.6px 'Liberation Sans', sans-serif;color:#fff;white-space:pre;">Alignment processing</div>
<div style="position:absolute;left:816px;top:977px;width:2px;height:12px;background:#c8c8c8"></div>
<div style="position:absolute;left:823px;top:977.69px;font:11px/11px 'Liberation Sans', sans-serif;color:#fff;white-space:pre;">Time used: 00:00:00 Time left: 00:00:00</div>
<div style="position:absolute;left:236px;top:128px;width:4px;height:796px;background:#ece9d8"></div>
<div style="position:absolute;left:242px;top:127px;width:1px;height:520px;background:#6e6a5e;border-right:1px solid #f4f0e2"></div>
<div style="position:absolute;left:235px;top:134px;width:1px;height:790px;background:#b0b2b8"></div>
<div style="position:absolute;left:247px;top:127px;width:1px;height:520px;background:#6e6a5e;border-right:1px solid #f4f0e2"></div>
<div style="position:absolute;left:1265px;top:127px;width:1px;height:797px;background:#fff"></div>
<div style="position:absolute;left:247px;top:127px;width:1018px;height:1px;background:#716f63"></div>
<div style="position:absolute;left:1273px;top:53px;width:5px;height:920px;background:#f2efe2"></div>
<div style="position:absolute;left:1278px;top:53px;width:2px;height:920px;background:linear-gradient(90deg,#8a8676,#6a685a)"></div>
<svg style="position:absolute;left:249px;top:129px" width="256" height="256" viewBox="0 0 256 256">
<defs>
<filter id="bl" x="-50%" y="-50%" width="200%" height="200%"><feGaussianBlur stdDeviation="3"/></filter>
<radialGradient id="pg" cx="50%" cy="58%" r="55%"><stop offset="0" stop-color="#ece4a8"/><stop offset="0.45" stop-color="#d2d2b0"/><stop offset="0.8" stop-color="#b4baa8"/><stop offset="1" stop-color="#7a846c"/></radialGradient>
</defs>
<rect width="256" height="256" fill="#000"/>
<g filter="url(#bl)" transform="rotate(2.5 128 129)">
<path fill-rule="evenodd" fill="#b6b8c6" d="M47 129 a81 19 0 1 0 162 0 a81 19 0 1 0 -162 0 Z M74 129 a54 11 0 1 0 108 0 a54 11 0 1 0 -108 0 Z"/>
<ellipse cx="128" cy="127" rx="32" ry="33" fill="url(#pg)"/>
<path d="M74 131 A54 11 0 0 0 182 131" fill="none" stroke="#c4c4cc" stroke-width="5" opacity="0.85"/>
</g>
</svg>
<div style="position:absolute;left:972px;top:143px;width:264px;height:496px;background:#4e4e4e"></div>
<div style="position:absolute;left:975px;top:143px;width:258px;height:22px;background:linear-gradient(#3a3c4a 0,#40444f 7%,#40444f 28%,#2f312f 31%,#3a3a39 60%,#464541 93%,#2e2e2e 100%)"></div>
<div style="position:absolute;right:73px;top:150.84px;font:bold 12px/12px 'Liberation Sans', sans-serif;color:#fff;white-space:pre;">Framelist</div>
<svg style="position:absolute;left:1216px;top:150px" width="12" height="12"><path d="M2 2 L9 9 M9 2 L2 9" stroke="#fff" stroke-width="2.2"/></svg>
<div style="position:absolute;left:975px;top:165px;width:258px;height:91px;background:linear-gradient(#dcdfe4,#d0d3da)"></div>
<div style="position:absolute;left:978px;top:169px;width:80px;height:24px;box-sizing:border-box;border:1px solid #b3b6bd;border-radius:2px;background:linear-gradient(#e6e8ec,#cdd1d8)"></div>
<div style="position:absolute;left:978px;width:80px;text-align:center;top:176.11px;font:10.5px/10.5px 'Liberation Sans', sans-serif;color:#000;white-space:pre;">Check all</div>
<div style="position:absolute;left:1148px;top:168px;width:80px;height:24px;box-sizing:border-box;border:1px solid #b3b6bd;border-radius:2px;background:linear-gradient(#e6e8ec,#cdd1d8)"></div>
<div style="position:absolute;left:1148px;width:80px;text-align:center;top:175.11px;font:10.5px/10.5px 'Liberation Sans', sans-serif;color:#000;white-space:pre;">Save</div>
<div style="position:absolute;left:978px;top:199px;width:80px;height:24px;box-sizing:border-box;border:1px solid #b3b6bd;border-radius:2px;background:linear-gradient(#e6e8ec,#cdd1d8)"></div>
<div style="position:absolute;left:978px;width:80px;text-align:center;top:206.11px;font:10.5px/10.5px 'Liberation Sans', sans-serif;color:#000;white-space:pre;">Check none</div>
<div style="position:absolute;left:1062px;top:199px;width:80px;height:24px;box-sizing:border-box;border:1px solid #b3b6bd;border-radius:2px;background:linear-gradient(#e6e8ec,#cdd1d8)"></div>
<div style="position:absolute;left:1062px;width:80px;text-align:center;top:206.11px;font:10.5px/10.5px 'Liberation Sans', sans-serif;color:#000;white-space:pre;">Sort</div>
<div style="position:absolute;left:1148px;top:199px;width:80px;height:24px;box-sizing:border-box;border:1px solid #b3b6bd;border-radius:2px;background:linear-gradient(#e6e8ec,#cdd1d8)"></div>
<div style="position:absolute;left:1148px;width:80px;text-align:center;top:206.11px;font:10.5px/10.5px 'Liberation Sans', sans-serif;color:#000;white-space:pre;">Load</div>
<div style="position:absolute;left:978px;top:230px;width:80px;height:24px;box-sizing:border-box;border:1px solid #b3b6bd;border-radius:2px;background:linear-gradient(#e6e8ec,#cdd1d8)"></div>
<div style="position:absolute;left:978px;width:80px;text-align:center;top:237.11px;font:10.5px/10.5px 'Liberation Sans', sans-serif;color:#000;white-space:pre;">Empty List</div>
<div style="position:absolute;left:975px;top:255px;width:258px;height:381px;background:#fff;border-left:2px solid #a6a494;border-top:2px solid #8e8c80;border-right:2px solid #dcdad0;border-bottom:2px solid #e8e6dc;box-sizing:border-box"></div>
<div style="position:absolute;left:980px;top:259px;width:11px;height:11px;box-sizing:border-box;border:1px solid #aca899;background:#fff"></div>
<svg style="position:absolute;left:980px;top:259px" width="11" height="11"><path d="M2.3 5.2 L4.5 7.8 L8.7 2.3" stroke="#000" stroke-width="2.3" fill="none"/></svg>
<div style="position:absolute;left:994px;top:259.69px;font:11px/11px 'Liberation Sans', sans-serif;color:#000;white-space:pre;">4_1_1000.bmp</div>
<div style="position:absolute;left:980px;top:272px;width:11px;height:11px;box-sizing:border-box;border:1px solid #aca899;background:#fff"></div>
<svg style="position:absolute;left:980px;top:272px" width="11" height="11"><path d="M2.3 5.2 L4.5 7.8 L8.7 2.3" stroke="#000" stroke-width="2.3" fill="none"/></svg>
<div style="position:absolute;left:994px;top:272.69px;font:11px/11px 'Liberation Sans', sans-serif;color:#000;white-space:pre;">4_2_2000.bmp</div>
<div style="position:absolute;left:980px;top:285px;width:11px;height:11px;box-sizing:border-box;border:1px solid #aca899;background:#fff"></div>
<svg style="position:absolute;left:980px;top:285px" width="11" height="11"><path d="M2.3 5.2 L4.5 7.8 L8.7 2.3" stroke="#000" stroke-width="2.3" fill="none"/></svg>
<div style="position:absolute;left:994px;top:285.69px;font:11px/11px 'Liberation Sans', sans-serif;color:#000;white-space:pre;">5_1_6000.bmp</div>
<div style="position:absolute;left:980px;top:298px;width:11px;height:11px;box-sizing:border-box;border:1px solid #aca899;background:#fff"></div>
<svg style="position:absolute;left:980px;top:298px" width="11" height="11"><path d="M2.3 5.2 L4.5 7.8 L8.7 2.3" stroke="#000" stroke-width="2.3" fill="none"/></svg>
<div style="position:absolute;left:994px;top:298.69px;font:11px/11px 'Liberation Sans', sans-serif;color:#000;white-space:pre;">4_2_5000.bmp</div>
<div style="position:absolute;left:980px;top:311px;width:11px;height:11px;box-sizing:border-box;border:1px solid #aca899;background:#fff"></div>
<svg style="position:absolute;left:980px;top:311px" width="11" height="11"><path d="M2.3 5.2 L4.5 7.8 L8.7 2.3" stroke="#000" stroke-width="2.3" fill="none"/></svg>
<div style="position:absolute;left:994px;top:311.69px;font:11px/11px 'Liberation Sans', sans-serif;color:#000;white-space:pre;">4_2_3000.bmp</div>
<div style="position:absolute;left:980px;top:324px;width:11px;height:11px;box-sizing:border-box;border:1px solid #aca899;background:#fff"></div>
<svg style="position:absolute;left:980px;top:324px" width="11" height="11"><path d="M2.3 5.2 L4.5 7.8 L8.7 2.3" stroke="#000" stroke-width="2.3" fill="none"/></svg>
<div style="position:absolute;left:994px;top:324.69px;font:11px/11px 'Liberation Sans', sans-serif;color:#000;white-space:pre;">4_2_4000.bmp</div>
<div style="position:absolute;left:980px;top:337px;width:11px;height:11px;box-sizing:border-box;border:1px solid #aca899;background:#fff"></div>
<svg style="position:absolute;left:980px;top:337px" width="11" height="11"><path d="M2.3 5.2 L4.5 7.8 L8.7 2.3" stroke="#000" stroke-width="2.3" fill="none"/></svg>
<div style="position:absolute;left:994px;top:337.69px;font:11px/11px 'Liberation Sans', sans-serif;color:#000;white-space:pre;">5_1_5000.bmp</div>
<div style="position:absolute;left:980px;top:350px;width:11px;height:11px;box-sizing:border-box;border:1px solid #aca899;background:#fff"></div>
<svg style="position:absolute;left:980px;top:350px" width="11" height="11"><path d="M2.3 5.2 L4.5 7.8 L8.7 2.3" stroke="#000" stroke-width="2.3" fill="none"/></svg>
<div style="position:absolute;left:994px;top:350.69px;font:11px/11px 'Liberation Sans', sans-serif;color:#000;white-space:pre;">4_2_6000.bmp</div>
<div style="position:absolute;left:980px;top:363px;width:11px;height:11px;box-sizing:border-box;border:1px solid #aca899;background:#fff"></div>
<svg style="position:absolute;left:980px;top:363px" width="11" height="11"><path d="M2.3 5.2 L4.5 7.8 L8.7 2.3" stroke="#000" stroke-width="2.3" fill="none"/></svg>
<div style="position:absolute;left:994px;top:363.69px;font:11px/11px 'Liberation Sans', sans-serif;color:#000;white-space:pre;">5_1_4000.bmp</div>
<div style="position:absolute;left:980px;top:376px;width:11px;height:11px;box-sizing:border-box;border:1px solid #aca899;background:#fff"></div>
<svg style="position:absolute;left:980px;top:376px" width="11" height="11"><path d="M2.3 5.2 L4.5 7.8 L8.7 2.3" stroke="#000" stroke-width="2.3" fill="none"/></svg>
<div style="position:absolute;left:994px;top:376.69px;font:11px/11px 'Liberation Sans', sans-serif;color:#000;white-space:pre;">4_1_2000.bmp</div>
<div style="position:absolute;left:980px;top:389px;width:11px;height:11px;box-sizing:border-box;border:1px solid #aca899;background:#fff"></div>
<svg style="position:absolute;left:980px;top:389px" width="11" height="11"><path d="M2.3 5.2 L4.5 7.8 L8.7 2.3" stroke="#000" stroke-width="2.3" fill="none"/></svg>
<div style="position:absolute;left:994px;top:389.69px;font:11px/11px 'Liberation Sans', sans-serif;color:#000;white-space:pre;">5_1_3000.bmp</div>
<div style="position:absolute;left:980px;top:402px;width:11px;height:11px;box-sizing:border-box;border:1px solid #aca899;background:#fff"></div>
<div style="position:absolute;left:994px;top:402.69px;font:11px/11px 'Liberation Sans', sans-serif;color:#000;white-space:pre;">4_1_3000.bmp</div>
<div style="position:absolute;left:980px;top:415px;width:11px;height:11px;box-sizing:border-box;border:1px solid #aca899;background:#fff"></div>
<svg style="position:absolute;left:980px;top:415px" width="11" height="11"><path d="M2.3 5.2 L4.5 7.8 L8.7 2.3" stroke="#000" stroke-width="2.3" fill="none"/></svg>
<div style="position:absolute;left:994px;top:415.69px;font:11px/11px 'Liberation Sans', sans-serif;color:#000;white-space:pre;">4_2_1000.bmp</div>
<div style="position:absolute;left:980px;top:428px;width:11px;height:11px;box-sizing:border-box;border:1px solid #aca899;background:#fff"></div>
<svg style="position:absolute;left:980px;top:428px" width="11" height="11"><path d="M2.3 5.2 L4.5 7.8 L8.7 2.3" stroke="#000" stroke-width="2.3" fill="none"/></svg>
<div style="position:absolute;left:994px;top:428.69px;font:11px/11px 'Liberation Sans', sans-serif;color:#000;white-space:pre;">4_1_4000.bmp</div>
<div style="position:absolute;left:980px;top:441px;width:11px;height:11px;box-sizing:border-box;border:1px solid #aca899;background:#fff"></div>
<svg style="position:absolute;left:980px;top:441px" width="11" height="11"><path d="M2.3 5.2 L4.5 7.8 L8.7 2.3" stroke="#000" stroke-width="2.3" fill="none"/></svg>
<div style="position:absolute;left:994px;top:441.69px;font:11px/11px 'Liberation Sans', sans-serif;color:#000;white-space:pre;">4_1_5000.bmp</div>
<div style="position:absolute;left:980px;top:454px;width:11px;height:11px;box-sizing:border-box;border:1px solid #aca899;background:#fff"></div>
<div style="position:absolute;left:994px;top:454.69px;font:11px/11px 'Liberation Sans', sans-serif;color:#000;white-space:pre;">4_1_6000.bmp</div>
<div style="position:absolute;left:980px;top:467px;width:11px;height:11px;box-sizing:border-box;border:1px solid #aca899;background:#fff"></div>
<svg style="position:absolute;left:980px;top:467px" width="11" height="11"><path d="M2.3 5.2 L4.5 7.8 L8.7 2.3" stroke="#000" stroke-width="2.3" fill="none"/></svg>
<div style="position:absolute;left:994px;top:467.69px;font:11px/11px 'Liberation Sans', sans-serif;color:#000;white-space:pre;">5_2_5000.bmp</div>
<div style="position:absolute;left:980px;top:480px;width:11px;height:11px;box-sizing:border-box;border:1px solid #aca899;background:#fff"></div>
<svg style="position:absolute;left:980px;top:480px" width="11" height="11"><path d="M2.3 5.2 L4.5 7.8 L8.7 2.3" stroke="#000" stroke-width="2.3" fill="none"/></svg>
<div style="position:absolute;left:994px;top:480.69px;font:11px/11px 'Liberation Sans', sans-serif;color:#000;white-space:pre;">5_2_6000.bmp</div>
<div style="position:absolute;left:980px;top:493px;width:11px;height:11px;box-sizing:border-box;border:1px solid #aca899;background:#fff"></div>
<svg style="position:absolute;left:980px;top:493px" width="11" height="11"><path d="M2.3 5.2 L4.5 7.8 L8.7 2.3" stroke="#000" stroke-width="2.3" fill="none"/></svg>
<div style="position:absolute;left:994px;top:493.69px;font:11px/11px 'Liberation Sans', sans-serif;color:#000;white-space:pre;">5_2_4000.bmp</div>
<div style="position:absolute;left:980px;top:506px;width:11px;height:11px;box-sizing:border-box;border:1px solid #aca899;background:#fff"></div>
<svg style="position:absolute;left:980px;top:506px" width="11" height="11"><path d="M2.3 5.2 L4.5 7.8 L8.7 2.3" stroke="#000" stroke-width="2.3" fill="none"/></svg>
<div style="position:absolute;left:994px;top:506.69px;font:11px/11px 'Liberation Sans', sans-serif;color:#000;white-space:pre;">5_2_3000.bmp</div>
<div style="position:absolute;left:993px;top:518px;width:237px;height:12px;background:#316ac5;outline:1px dotted #c08000;outline-offset:-1px"></div>
<div style="position:absolute;left:980px;top:519px;width:11px;height:11px;box-sizing:border-box;border:1px solid #aca899;background:#fff"></div>
<svg style="position:absolute;left:980px;top:519px" width="11" height="11"><path d="M2.3 5.2 L4.5 7.8 L8.7 2.3" stroke="#000" stroke-width="2.3" fill="none"/></svg>
<div style="position:absolute;left:994px;top:519.69px;font:11px/11px 'Liberation Sans', sans-serif;color:#fff;white-space:pre;">5_1_2000.bmp</div>
<div style="position:absolute;left:980px;top:532px;width:11px;height:11px;box-sizing:border-box;border:1px solid #aca899;background:#fff"></div>
<svg style="position:absolute;left:980px;top:532px" width="11" height="11"><path d="M2.3 5.2 L4.5 7.8 L8.7 2.3" stroke="#000" stroke-width="2.3" fill="none"/></svg>
<div style="position:absolute;left:994px;top:532.69px;font:11px/11px 'Liberation Sans', sans-serif;color:#000;white-space:pre;">4_1_0500.bmp</div>
<div style="position:absolute;left:980px;top:545px;width:11px;height:11px;box-sizing:border-box;border:1px solid #aca899;background:#fff"></div>
<svg style="position:absolute;left:980px;top:545px" width="11" height="11"><path d="M2.3 5.2 L4.5 7.8 L8.7 2.3" stroke="#000" stroke-width="2.3" fill="none"/></svg>
<div style="position:absolute;left:994px;top:545.69px;font:11px/11px 'Liberation Sans', sans-serif;color:#000;white-space:pre;">5_2_2000.bmp</div>
<div style="position:absolute;left:980px;top:558px;width:11px;height:11px;box-sizing:border-box;border:1px solid #aca899;background:#fff"></div>
<svg style="position:absolute;left:980px;top:558px" width="11" height="11"><path d="M2.3 5.2 L4.5 7.8 L8.7 2.3" stroke="#000" stroke-width="2.3" fill="none"/></svg>
<div style="position:absolute;left:994px;top:558.69px;font:11px/11px 'Liberation Sans', sans-serif;color:#000;white-space:pre;">4_2_0500.bmp</div>
<div style="position:absolute;left:980px;top:571px;width:11px;height:11px;box-sizing:border-box;border:1px solid #aca899;background:#fff"></div>
<svg style="position:absolute;left:980px;top:571px" width="11" height="11"><path d="M2.3 5.2 L4.5 7.8 L8.7 2.3" stroke="#000" stroke-width="2.3" fill="none"/></svg>
<div style="position:absolute;left:994px;top:571.69px;font:11px/11px 'Liberation Sans', sans-serif;color:#000;white-space:pre;">5_2_1000.bmp</div>
<div style="position:absolute;left:980px;top:584px;width:11px;height:11px;box-sizing:border-box;border:1px solid #aca899;background:#fff"></div>
<svg style="position:absolute;left:980px;top:584px" width="11" height="11"><path d="M2.3 5.2 L4.5 7.8 L8.7 2.3" stroke="#000" stroke-width="2.3" fill="none"/></svg>
<div style="position:absolute;left:994px;top:584.69px;font:11px/11px 'Liberation Sans', sans-serif;color:#000;white-space:pre;">5_1_1000.bmp</div>
<div style="position:absolute;left:980px;top:597px;width:11px;height:11px;box-sizing:border-box;border:1px solid #aca899;background:#fff"></div>
<svg style="position:absolute;left:980px;top:597px" width="11" height="11"><path d="M2.3 5.2 L4.5 7.8 L8.7 2.3" stroke="#000" stroke-width="2.3" fill="none"/></svg>
<div style="position:absolute;left:994px;top:597.69px;font:11px/11px 'Liberation Sans', sans-serif;color:#000;white-space:pre;">5_2_0500.bmp</div>
<div style="position:absolute;left:980px;top:610px;width:11px;height:11px;box-sizing:border-box;border:1px solid #aca899;background:#fff"></div>
<div style="position:absolute;left:994px;top:610.69px;font:11px/11px 'Liberation Sans', sans-serif;color:#000;white-space:pre;">5_1_0500.bmp</div>
<div style="position:absolute;left:1103px;top:539.03px;font:29.5px/29.5px 'Liberation Serif', serif;color:#f5001e;white-space:pre;-webkit-text-stroke:0.5px #f5001e">плохие</div>
<div style="position:absolute;left:1103px;top:575.03px;font:29.5px/29.5px 'Liberation Serif', serif;color:#f5001e;white-space:pre;-webkit-text-stroke:0.5px #f5001e">кадры</div>
<svg style="position:absolute;left:760px;top:390px" width="240" height="240"><path d="M17 72.5 L215.5 16.5 M17 72.5 L217 69.5 M17 72.5 L221.5 225" stroke="#fa0a28" stroke-width="4" stroke-linecap="round" fill="none"/></svg>
<div style="position:absolute;left:677px;top:422.20px;font:29.3px/29.3px 'Liberation Serif', serif;color:#f5001e;white-space:pre;-webkit-text-stroke:0.5px #f5001e">снять</div>
<div style="position:absolute;left:677px;top:458.20px;font:29.3px/29.3px 'Liberation Serif', serif;color:#f5001e;white-space:pre;-webkit-text-stroke:0.5px #f5001e">галочку</div>
<div style="position:absolute;left:235px;top:646px;width:1002px;height:287px;background:#4e4e4e"></div>
<div style="position:absolute;left:238px;top:646px;width:996px;height:22px;background:linear-gradient(#3a3c4a 0,#40444f 7%,#40444f 28%,#2f312f 31%,#3a3a39 60%,#464541 93%,#2e2e2e 100%)"></div>
<div style="position:absolute;left:244px;top:653.84px;font:bold 12px/12px 'Liberation Sans', sans-serif;color:#fff;white-space:pre;">RegiStrationgraph</div>
<svg style="position:absolute;left:1201px;top:652px" width="15" height="15"><polygon points="4.3,0 10.7,0 15,4.3 15,10.7 10.7,15 4.3,15 0,10.7 0,4.3" fill="#f3f5ea"/><path d="M4 5 L7.5 8.3 L11 5 M4 9.3 L7.5 12.6 L11 9.3" stroke="#3c5c08" stroke-width="1.7" fill="none"/></svg>
<svg style="position:absolute;left:1218px;top:654px" width="12" height="12"><path d="M2 2 L9 9 M9 2 L2 9" stroke="#fff" stroke-width="2.2"/></svg>
<div style="position:absolute;left:238px;top:668px;width:995px;height:262px;background:#fff"></div>
<svg style="position:absolute;left:0;top:0" width="1280" height="993" shape-rendering="crispEdges"><rect x="343" y="680" width="1" height="235" fill="#c8c8c8"/><rect x="446" y="680" width="1" height="235" fill="#c8c8c8"/><rect x="548" y="680" width="1" height="235" fill="#c8c8c8"/><rect x="650" y="680" width="1" height="235" fill="#c8c8c8"/><rect x="753" y="680" width="1" height="235" fill="#c8c8c8"/><rect x="855" y="680" width="1" height="235" fill="#c8c8c8"/><rect x="957" y="680" width="1" height="235" fill="#c8c8c8"/><rect x="1060" y="680" width="1" height="235" fill="#c8c8c8"/><rect x="1162" y="680" width="1" height="235" fill="#c8c8c8"/><rect x="240" y="704" width="989" height="1" fill="#c8c8c8"/><rect x="240" y="727" width="989" height="1" fill="#c8c8c8"/><rect x="240" y="751" width="989" height="1" fill="#c8c8c8"/><rect x="240" y="775" width="989" height="1" fill="#c8c8c8"/><rect x="240" y="798" width="989" height="1" fill="#c8c8c8"/><rect x="240" y="821" width="989" height="1" fill="#c8c8c8"/><rect x="240" y="845" width="989" height="1" fill="#c8c8c8"/><rect x="240" y="868" width="989" height="1" fill="#c8c8c8"/><rect x="240" y="892" width="989" height="1" fill="#c8c8c8"/><rect x="240" y="681" width="93" height="1" fill="#ff0000"/><rect x="333" y="682" width="146" height="1" fill="#ff0000"/><rect x="479" y="683" width="110" height="1" fill="#ff0000"/><rect x="589" y="684" width="110" height="1" fill="#ff0000"/><rect x="699" y="685" width="36" height="1" fill="#ff0000"/><rect x="735" y="686" width="37" height="1" fill="#ff0000"/><rect x="772" y="687" width="36" height="1" fill="#ff0000"/><rect x="808" y="688" width="110" height="1" fill="#ff0000"/><rect x="918" y="689" width="37" height="1" fill="#ff0000"/><rect x="955" y="690" width="21" height="1" fill="#ff0000"/><rect x="976" y="691" width="14" height="1" fill="#ff0000"/><rect x="990" y="692" width="15" height="1" fill="#ff0000"/><rect x="1005" y="694" width="58" height="1" fill="#ff0000"/><rect x="1063" y="695" width="28" height="1" fill="#ff0000"/><rect x="1091" y="696" width="18" height="1" fill="#ff0000"/><rect x="1109" y="698" width="16" height="1" fill="#ff0000"/><rect x="1125" y="699" width="12" height="1" fill="#ff0000"/><rect x="1137" y="700" width="12" height="1" fill="#ff0000"/><rect x="1149" y="701" width="25" height="1" fill="#ff0000"/><rect x="1174" y="703" width="23" height="1" fill="#ff0000"/><rect x="1197" y="704" width="32" height="1" fill="#ff0000"/></svg><svg style="position:absolute;left:0;top:0" width="1280" height="993"><polyline fill="none" stroke="#008000" stroke-width="1.1" points="240.0,915 276.6,901.25 313.3,867 349.9,888 386.5,897 423.1,893.4 459.8,877 496.4,878 533.0,879 569.7,911 606.3,881.6 642.9,906 679.6,894.4 716.2,901.25 752.8,893 789.4,881 826.1,856 862.7,842.5 899.3,861 936.0,864.4 972.6,853.4 1009.2,869 1045.9,832.8 1082.5,764.8 1119.1,806 1155.7,750.6 1192.4,776 1229.0,681.8"/></svg><svg style="position:absolute;left:0;top:0" width="1280" height="993" shape-rendering="crispEdges"><rect x="972" y="680" width="3" height="235" fill="#008c8c"/><rect x="973" y="680" width="1" height="235" fill="#00f0f0"/><rect x="240" y="680" width="990" height="1" fill="#000"/><rect x="240" y="680" width="2" height="235" fill="#000"/><rect x="1228" y="680" width="2" height="235" fill="#000"/><rect x="240" y="913" width="990" height="2" fill="#000"/></svg>
<div style="position:absolute;left:239px;top:913px;width:157px;height:14px;background:#fff;border:1px solid #000;box-sizing:border-box"></div>
<div style="position:absolute;left:244px;top:914.03px;font:10.6px/10.6px 'Liberation Sans', sans-serif;color:#0000ff;white-space:pre;">Frame 16 Quality =1953,22800</div>
<div style="position:absolute;left:1071px;top:912px;width:156px;height:18px;background:#fff;border:1px solid #000;border-bottom:none;box-sizing:border-box"></div>
<div style="position:absolute;left:1077px;top:921px;width:12px;height:1px;background:#ff0000"></div>
<div style="position:absolute;left:1093px;top:916.69px;font:11px/11px 'Liberation Sans', sans-serif;color:#000;white-space:pre;">Quality</div>
<div style="position:absolute;left:1151px;top:921px;width:12px;height:1px;background:#008000"></div>
<div style="position:absolute;left:1165px;top:916.69px;font:11px/11px 'Liberation Sans', sans-serif;color:#000;white-space:pre;">Difference</div>
<div style="position:absolute;left:1003px;top:786.94px;font:29.6px/29.6px 'Liberation Serif', serif;color:#f5001e;white-space:pre;-webkit-text-stroke:0.5px #f5001e">плохие кадры</div>
</body></html>
